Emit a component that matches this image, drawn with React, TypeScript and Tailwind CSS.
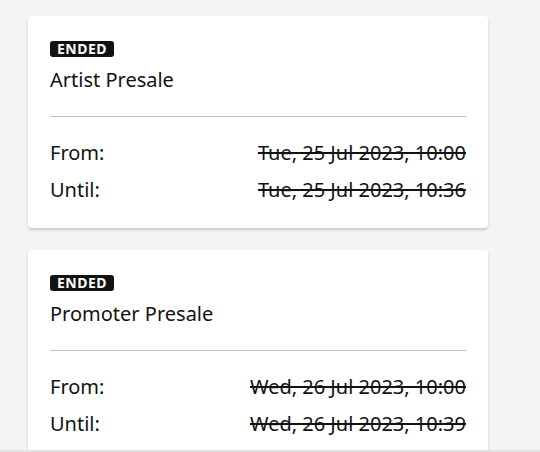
const sales = [
  { name: 'Artist Presale', from: 'Tue, 25 Jul 2023, 10:00', until: 'Tue, 25 Jul 2023, 10:36' },
  { name: 'Promoter Presale', from: 'Wed, 26 Jul 2023, 10:00', until: 'Wed, 26 Jul 2023, 10:39' },
];

function SaleCard({ name, from, until }: { name: string; from: string; until: string }) {
  return (
    <div className="w-[460px] rounded-[4px] bg-white px-[22px] pt-[25px] pb-[24px] shadow-[0_2px_3px_rgba(0,0,0,0.18)]">
      <span className="block h-4 w-fit rounded-[3px] bg-[#121212] px-[7px] text-[14px] font-bold leading-4 tracking-[0.5px] text-white">
        ENDED
      </span>
      <h3 className="mt-[9px] text-[20px] leading-7 text-[#121212]">{name}</h3>
      <div className="mt-[22px] h-px bg-[#bfbfbf]" />
      <dl className="mt-[22px] flex flex-col gap-[9px] text-[20px] leading-7 text-[#121212]">
        <div className="flex justify-between">
          <dt>From:</dt>
          <dd className="line-through decoration-[2px]">{from}</dd>
        </div>
        <div className="flex justify-between">
          <dt>Until:</dt>
          <dd className="line-through decoration-[2px]">{until}</dd>
        </div>
      </dl>
    </div>
  );
}

export default function App() {
  return (
    <div className="h-[452px] overflow-hidden border-b-2 border-[#e2e2e2] bg-[#f4f4f4] font-['Noto_Sans',sans-serif]">
      <div className="flex flex-col gap-[22px] pl-[28px] pt-[16px]">
        {sales.map((s) => (
          <SaleCard key={s.name} {...s} />
        ))}
      </div>
    </div>
  );
}
